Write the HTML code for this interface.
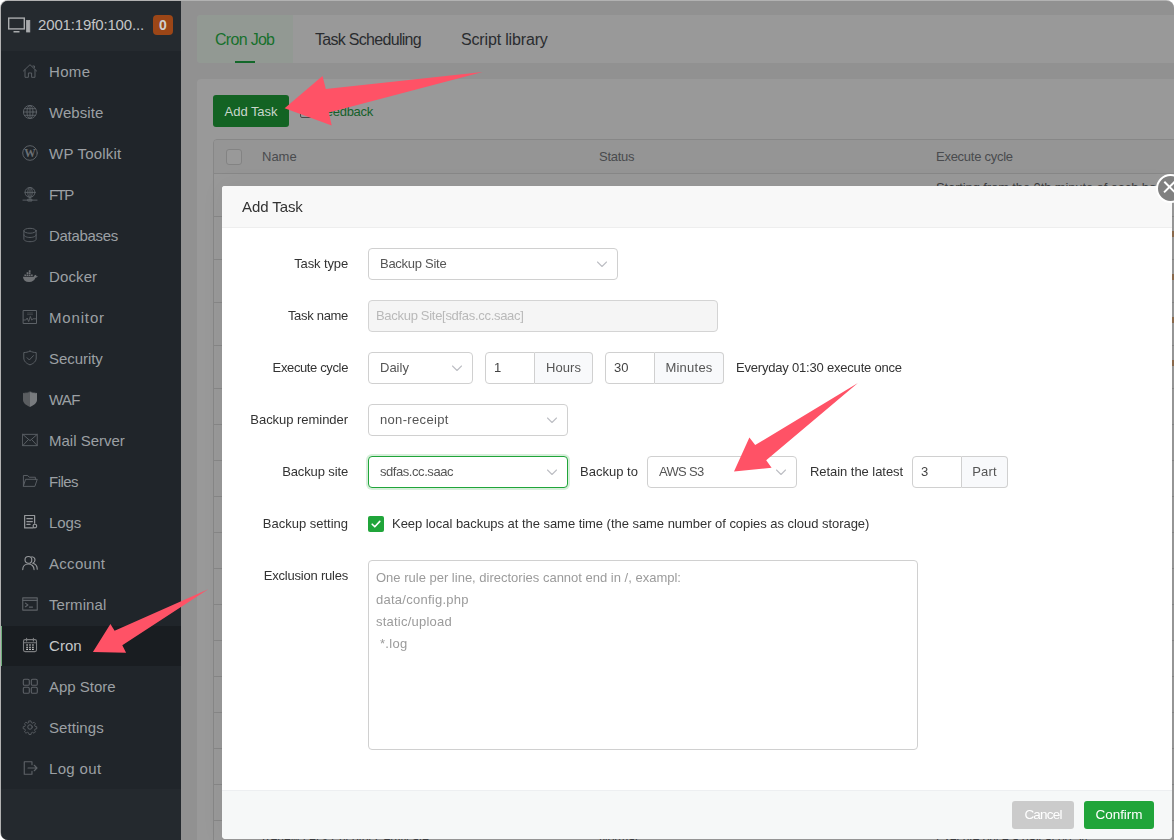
<!DOCTYPE html>
<html lang="en">
<head>
<meta charset="utf-8">
<title>Cron - Add Task</title>
<style>
*{box-sizing:border-box;margin:0;padding:0}
html,body{width:1174px;height:840px;overflow:hidden;background:#fff}
body{font-family:"Liberation Sans",sans-serif;font-size:13px;color:#333}
#frame{position:absolute;left:0;top:0;width:1174px;height:840px;overflow:hidden;background:#919191;clip-path:inset(1px 0 0 1px round 7px 7px 0 7px)}
#edge{position:absolute;left:0;top:0;width:1174px;height:840px;border-radius:8px 8px 0 8px;background:#b2b2b2}
/* sidebar */
#side{position:absolute;left:0;top:0;width:181px;height:840px;background:#24292e}
#side .head{position:absolute;left:0;top:0;width:181px;height:51px;background:#252a2f}
#side .ip{position:absolute;left:38px;top:16px;font-size:15px;line-height:18px;color:#c3c5c7;letter-spacing:-.15px;white-space:nowrap}
#side .badge{position:absolute;left:153px;top:15px;width:20px;height:20px;border-radius:4px;background:#9c4617;color:#cfcfcf;font-weight:bold;font-size:14px;line-height:20px;text-align:center}
#menu{position:absolute;left:0;top:51px;width:181px;height:738px;background:#20252a;list-style:none}
#menu li{position:relative;height:40px;margin-top:1px;line-height:39px;font-size:15px;color:#9ca0a4;padding-left:49px;white-space:nowrap}
#menu li svg{position:absolute;left:22px;top:11px;width:16px;height:16px;fill:none;stroke:#5d6267;stroke-width:1;stroke-linecap:round;stroke-linejoin:round}
#menu li.on{background:#191d21;color:#c6c8ca}

#menu li.on:before{content:"";position:absolute;left:0;top:0;width:2px;height:40px;background:#6fae7b}
/* main */
.card{position:absolute;background:#999;border-radius:4px}
#tabs{left:197px;top:15px;width:1000px;height:48px}
#tabs .t{position:absolute;top:0;height:48px;line-height:49px;font-size:16px;color:#2a2c2f;white-space:nowrap;letter-spacing:-.7px}
#tabs .t.on{left:0;width:96px;background:#929993;color:#17702c;border-radius:4px 0 0 4px;padding-left:18px}
#tabs .t.on:after{content:"";position:absolute;left:38px;bottom:0;width:20px;height:2px;background:#13682a}
#panel{left:197px;top:79px;width:1000px;height:800px}
#addbtn{position:absolute;left:16px;top:16px;width:76px;height:32px;border-radius:3px;background:#136323;color:#c9d6cc;font-size:13px;line-height:34px;text-align:center;letter-spacing:-.06px}
#fb{position:absolute;left:103px;top:16px;height:32px;line-height:34px;color:#15602a;font-size:13px;white-space:nowrap;letter-spacing:-.25px}
#fb i{display:inline-block;width:12px;height:12px;border:1px solid #4a4a4a;border-radius:2px;vertical-align:-2px;margin-right:6px}
#tbl{position:absolute;left:16px;top:60px;width:1000px;height:760px;border:1px solid #878787;border-radius:4px;overflow:hidden}
#tbl .hd{position:relative;height:34px;background:#959595;border-bottom:1px solid #878787;color:#494b4e;font-size:13px;line-height:34px}
#tbl .hd span{position:absolute;top:0}
#tbl .hd .cb{position:absolute;left:12px;top:9px;width:16px;height:16px;border:1px solid #838383;border-radius:3px;background:#999}
#tbl .r{position:relative;border-bottom:1px solid #878787;color:#3c3d3f;font-size:12px;white-space:nowrap}
#tbl .r span{position:absolute}
#tbl .mk{position:absolute;left:958px;top:14px;width:3px;height:6px;background:#8d6c4e}
/* dialog */
#dlg{will-change:transform;position:absolute;left:222px;top:186px;width:950px;height:653px;background:#fff;border-radius:3px 0 4px 4px;box-shadow:0 0 24px rgba(0,0,0,.05)}
#dlg .hd{position:absolute;left:0;top:0;width:950px;height:42px;background:#f8f8f8;border-bottom:1px solid #eee;border-radius:3px 0 0 0}
#dlg .hd b{position:absolute;left:20px;top:0;line-height:42px;font-weight:normal;font-size:15px;color:#333;letter-spacing:-.09px}
#close{position:absolute;left:1155.5px;top:173.5px;width:29px;height:29px;border-radius:50%;background:#808080;border:2.5px solid #fff;z-index:5}
#close:before,#close:after{content:"";position:absolute;left:4.5px;top:10.8px;width:15px;height:2.4px;background:#fff;transform:rotate(45deg)}
#close:after{transform:rotate(-45deg)}
.lb{position:absolute;left:0;width:126px;text-align:right;font-size:13px;line-height:32px;color:#333;white-space:nowrap}
.tx{position:absolute;font-size:13px;line-height:32px;color:#333;white-space:nowrap}
.sel,.inp{position:absolute;height:32px;border:1px solid #d0d0d0;border-radius:4px;background:#fff;font-size:13px;line-height:30px;color:#555;padding-left:11px;white-space:nowrap}
.sel svg{position:absolute;right:9px;top:9px;width:12px;height:12px;fill:none;stroke:#bdbfc4;stroke-width:1.1;stroke-linecap:round;stroke-linejoin:round}
.inp{padding-left:8px;border-radius:4px 0 0 4px;color:#444}
.add{position:absolute;height:32px;border:1px solid #d0d0d0;border-left:0;border-radius:0 4px 4px 0;background:#f8f9fb;font-size:13px;line-height:30px;color:#555;text-align:center}
.dis{background:#f5f5f5;color:#b9b9b9;border-color:#d4d4d4;padding-left:7px}
.foc{border-color:#20a53a;box-shadow:0 0 0 2px rgba(32,165,58,.18)}
#chk{position:absolute;left:146px;top:330px;width:16px;height:16px;border-radius:2px;background:#20a53a}
#chk svg{position:absolute;left:2px;top:2px;width:12px;height:12px;fill:none;stroke:#fff;stroke-width:1.6;stroke-linecap:round;stroke-linejoin:round}
#ta{position:absolute;left:146px;top:374px;width:550px;height:190px;border:1px solid #d0d0d0;border-radius:4px;padding:6px 7px;font-size:13px;line-height:22px;color:#9b9b9b;white-space:pre}
#ft{position:absolute;left:0;top:604px;width:950px;height:49px;background:#f6f8f8;border-top:1px solid #edeff1;border-radius:0 0 4px 4px}
#ft div{position:absolute;top:10px;height:28px;border-radius:3px;color:#fff;font-size:13.5px;line-height:28px;text-align:center}
#cancel{left:790px;width:62px;background:#cbcbcb}
#ok{left:862px;width:70px;background:#20a53a}
#arrows{position:absolute;left:0;top:0;width:1174px;height:840px;z-index:40;pointer-events:none}
</style>
</head>
<body>
<div id="edge"></div>
<div id="frame">
  <div id="side">
    <div class="head">
      <svg style="position:absolute;left:8px;top:16px" width="24" height="18" viewBox="0 0 24 18" fill="none" stroke="#a9abad" stroke-width="1.4"><rect x=".7" y="2.1" width="15.6" height="10.8"/><path d="M5.5 15.7h6" stroke-width="1.5"/><rect x="18.6" y="4.4" width="3.2" height="11.6" fill="#a9abad" stroke-width=".8"/></svg>
      <div class="ip">2001:19f0:100...</div>
      <div class="badge">0</div>
    </div>
    <ul id="menu">
      <li style="letter-spacing:0.33px"><svg viewBox="0 0 17 17"><path d="M1.5 8.5 8.5 1.8l7 6.7M3.2 7.2v8h3.6v-4.6h3.4v4.6h3.6v-8M11.6 3.2h1.6v1.6"/></svg>Home</li>
      <li style="letter-spacing:0.06px"><svg viewBox="0 0 17 17"><circle cx="8.5" cy="8.5" r="7"/><ellipse cx="8.5" cy="8.5" rx="3.2" ry="7"/><path d="M1.5 8.5h14M2.6 5h11.8M2.6 12h11.8M8.5 1.5v14"/></svg>Website</li>
      <li style="letter-spacing:0.22px"><svg viewBox="0 0 16 16"><circle cx="8" cy="8" r="7.3"/><text x="8" y="11.9" text-anchor="middle" font-family="Liberation Serif,serif" font-weight="bold" font-size="11.5" fill="#6c7074" stroke="none">W</text></svg>WP Toolkit</li>
      <li style="letter-spacing:-1.6px"><svg viewBox="0 0 17 17"><circle cx="8.5" cy="6.8" r="5.3"/><ellipse cx="8.5" cy="6.8" rx="2.3" ry="5.3"/><path d="M3.200 6.8h10.600M8.500 1.5v13.500M1 15h15M6.500 14h4v2h-4z"/></svg>FTP</li>
      <li style="letter-spacing:-0.31px"><svg viewBox="0 0 17 17"><ellipse cx="8.5" cy="4" rx="6.5" ry="2.6"/><path d="M2 4v9c0 1.4 2.9 2.6 6.5 2.6S15 14.4 15 13V4M2 8.5c0 1.4 2.9 2.6 6.5 2.6S15 9.9 15 8.5"/></svg>Databases</li>
      <li style="letter-spacing:0.12px"><svg viewBox="0 0 16 16" style="fill:#6f7275;stroke:none"><path d="M.9 7.7h11c.2-1.2 1-2 2.3-2-.1.700 0 1.2.3 1.6.500-.2 1-.2 1.4 0-.4.900-1.3 1.4-2.4 1.4-.9 2.5-3.1 4.2-6.4 4.2C3.400 12.9 1.3 11.2.9 7.7zM2.400 5.4h1.700v1.700H2.400zM4.600 5.4h1.700v1.700H4.600zM6.800 5.4h1.700v1.700H6.800zM9 5.4h1.700v1.700H9zM4.600 3.3h1.700V5H4.600zM6.800 3.3h1.700V5H6.800zM6.800 1.2h1.700v1.700H6.800z" transform="translate(0 1)"/></svg>Docker</li>
      <li style="letter-spacing:0.84px"><svg viewBox="0 0 16 16"><rect x="1.5" y="1.5" width="13" height="13" stroke-width="1"/><path d="M1.500 11h2.300l1.400-2 1.5 3.6 1.6-5.2 1.5 3.8 1-1.4h3.700" stroke-width=".9"/><path d="M5.500 4h5M5.500 5.6h5" stroke-width=".9" opacity=".55"/></svg>Monitor</li>
      <li style="letter-spacing:-0.06px"><svg viewBox="0 0 17 17"><path d="M8.500 1.2c2.200 1 4.4 1.5 6.6 1.5v5.800c0 3.4-2.6 5.8-6.6 7.3-4-1.5-6.6-3.9-6.6-7.3V2.700c2.200 0 4.4-.5 6.6-1.5zM5.400 8.2l2.400 2.4 4.3-4.6"/></svg>Security</li>
      <li style="letter-spacing:-0.74px"><svg viewBox="0 0 16 16" style="stroke:none"><path fill="#5a5d60" d="M1 2.3l1.400-.7v1L3.800 1.2v1.300L5.300.8v1.500L6.700.5v1.600L8 0v16C4 14.2 1 12 1 9z"/><path fill="#787b7e" d="M15 2.3l-1.4-.7v1L12.200 1.2v1.300L10.700.8v1.500L9.300.5v1.600L8 0v16c4-1.8 7-4 7-7z"/></svg>WAF</li>
      <li style="letter-spacing:0px"><svg viewBox="0 0 17 17"><rect x=".8" y="2.5" width="15.4" height="12"/><path d="M.8 2.5l7.700 6.7 7.7-6.7M.8 14.5l5.700-6.2M16.200 14.5l-5.7-6.2"/></svg>Mail Server</li>
      <li style="letter-spacing:-0.52px"><svg viewBox="0 0 17 17"><path d="M1.500 13.8V2.700h4.600l1.600 1.8h6.500v2.200M1.500 13.8l2.300-7.1h12.400l-2.4 7.1z"/></svg>Files</li>
      <li style="letter-spacing:-0.11px"><svg viewBox="0 0 17 17" style="stroke:#96999c"><path d="M11.800 14.8H2.800V1.600h10.600v8.200M5.200 5h5.800M5.200 8h5.800M5.200 11h3.400" stroke-width="1.3"/><circle cx="13.7" cy="12.8" r="1.9" stroke-width="1.3"/></svg>Logs</li>
      <li style="letter-spacing:0.3px"><svg viewBox="0 0 17 17" style="stroke:#96999c"><circle cx="6.8" cy="5.2" r="3.6" stroke-width="1.2"/><path d="M.8 15.5c0-3.6 2.6-6 6-6s6 2.4 6 6M10.400 1.8c2 .2 3.4 1.6 3.4 3.5 0 1.6-1 2.9-2.4 3.4 2.8.6 4.8 3 4.8 6.4" stroke-width="1.2"/></svg>Account</li>
      <li style="letter-spacing:0.09px"><svg viewBox="0 0 17 17"><rect x=".8" y="2" width="15.4" height="13" stroke-width="1.2"/><path d="M.8 4.6h15.400M3.600 7.6l2.700 1.9-2.7 1.9M7.800 11.8h3.400" stroke-width="1.2"/></svg>Terminal</li>
      <li class="on" style="letter-spacing:0.06px"><svg viewBox="0 0 16 16" style="stroke:#7c7e80"><rect x="1.5" y="2.6" width="13" height="12" rx="1.6" stroke-width="1.1"/><path d="M1.500 5.8h13M4.600 1.2v2.800M11.400 1.2v2.800" stroke-width="1.1"/><path d="M4.200 8h1.800M7.100 8h1.800M10 8h1.800M4.200 10.2h1.800M7.100 10.2h1.800M10 10.2h1.800M4.200 12.4h1.800M7.100 12.4h1.800M10 12.4h1.800" stroke="#cfcfcf" stroke-width="1.1" stroke-linecap="butt"/></svg>Cron</li>
      <li style="letter-spacing:0px"><svg viewBox="0 0 16 16"><rect x="1.3" y="1.3" width="6" height="6" rx="1.4" stroke-width="1.1"/><rect x="9.3" y="1.3" width="6" height="6" rx="1.4" stroke-width="1.1"/><rect x="1.3" y="9.3" width="6" height="6" rx="1.4" stroke-width="1.1"/><rect x="9.3" y="9.3" width="6" height="6" rx="1.4" stroke-width="1.1"/></svg>App Store</li>
      <li style="letter-spacing:0.07px"><svg viewBox="0 0 17 17"><circle cx="8.5" cy="8.5" r="2.4"/><path d="M7.300 1.2h2.400l.4 2 1.5.7 1.8-1.1 1.7 1.7-1.1 1.8.7 1.5 2 .4v2.400l-2 .4-.7 1.5 1.1 1.8-1.7 1.7-1.8-1.1-1.5.7-.4 2H7.300l-.4-2-1.5-.7-1.8 1.1-1.7-1.7L3 12.5l-.7-1.5-2-.4V8.200l2-.4L3 6.3 1.9 4.5l1.700-1.7 1.8 1.1 1.5-.7z" transform="translate(1 1) scale(.88)"/></svg>Settings</li>
      <li style="letter-spacing:0.34px"><svg viewBox="0 0 17 17"><path d="M10.600 5V1.800H2.400v13.400h8.200V12M6.400 8.5h9.400M13 5.6l2.900 2.9-2.9 2.9" stroke-width="1.2"/></svg>Log out</li>
    </ul>
  </div>

  <div class="card" id="tabs">
    <div class="t on">Cron Job</div>
    <div class="t" style="left:118px">Task Scheduling</div>
    <div class="t" style="left:264px;letter-spacing:-.16px">Script library</div>
  </div>

  <div class="card" id="panel">
    <div id="addbtn">Add Task</div>
    <div id="fb"><i></i>Feedback</div>
    <div id="tbl">
      <div class="hd"><i class="cb"></i><span style="left:48px">Name</span><span style="left:385px;letter-spacing:-.25px">Status</span><span style="left:722px;letter-spacing:-.26px">Execute cycle</span></div>
      <div class="r" style="height:43px"><span style="left:722px;top:6px;line-height:16px;font-size:13px;letter-spacing:-.12px">Starting from the 0th minute of each hour,<br>execute every 2 hours</span></div>
      <div class="r" style="height:43px"><i class="mk"></i></div>
      <div class="r" style="height:43px"><i class="mk"></i></div>
      <div class="r" style="height:43px"><i class="mk"></i></div>
      <div class="r" style="height:43px"><i class="mk"></i></div>
      <div class="r" style="height:36px"></div>
      <div class="r" style="height:36px"></div>
      <div class="r" style="height:36px"></div>
      <div class="r" style="height:36px"></div>
      <div class="r" style="height:36px"></div>
      <div class="r" style="height:36px"></div>
      <div class="r" style="height:36px"></div>
      <div class="r" style="height:36px"></div>
      <div class="r" style="height:36px"></div>
      <div class="r" style="height:36px"></div>
      <div class="r" style="height:36px"></div>
      <div class="r" style="height:36px"></div>
      <div class="r" style="height:36px;line-height:36px"><span style="left:48px">Renew Let's Encrypt Certificate</span><span style="left:385px">Normal</span><span style="left:722px">Execute once a day at 00:54</span></div>
    </div>
  </div>

  <div id="dlg">
    <div class="hd"><b>Add Task</b></div>

    <div class="lb" style="top:62px;letter-spacing:-0.13px">Task type</div>
    <div class="sel" style="left:146px;top:62px;width:250px;letter-spacing:-0.27px">Backup Site<svg viewBox="0 0 12 12"><path d="M1.500 4l4.500 4.5L10.500 4"/></svg></div>

    <div class="lb" style="top:114px;letter-spacing:-0.31px">Task name</div>
    <div class="sel dis" style="left:146px;top:114px;width:350px;letter-spacing:-0.3px">Backup Site[sdfas.cc.saac]</div>

    <div class="lb" style="top:166px;letter-spacing:-0.37px">Execute cycle</div>
    <div class="sel" style="left:146px;top:166px;width:105px">Daily<svg viewBox="0 0 12 12"><path d="M1.500 4l4.500 4.5L10.500 4"/></svg></div>
    <div class="inp" style="left:263px;top:166px;width:50px">1</div>
    <div class="add" style="left:313px;top:166px;width:58px;letter-spacing:0.05px">Hours</div>
    <div class="inp" style="left:383px;top:166px;width:50px">30</div>
    <div class="add" style="left:433px;top:166px;width:69px;letter-spacing:0.24px">Minutes</div>
    <div class="tx" style="left:514px;top:166px;letter-spacing:-0.2px">Everyday 01:30 execute once</div>

    <div class="lb" style="top:218px;letter-spacing:-0.04px">Backup reminder</div>
    <div class="sel" style="left:146px;top:218px;width:200px;letter-spacing:0.33px">non-receipt<svg viewBox="0 0 12 12"><path d="M1.500 4l4.500 4.5L10.500 4"/></svg></div>

    <div class="lb" style="top:270px;letter-spacing:-0.13px">Backup site</div>
    <div class="sel foc" style="left:146px;top:270px;width:200px;letter-spacing:-0.44px">sdfas.cc.saac<svg viewBox="0 0 12 12"><path d="M1.500 4l4.500 4.5L10.500 4"/></svg></div>
    <div class="tx" style="left:358px;top:270px;letter-spacing:0.02px">Backup to</div>
    <div class="sel" style="left:425px;top:270px;width:150px;letter-spacing:-0.67px">AWS S3<svg viewBox="0 0 12 12"><path d="M1.500 4l4.500 4.5L10.500 4"/></svg></div>
    <div class="tx" style="left:588px;top:270px;letter-spacing:-0.05px">Retain the latest</div>
    <div class="inp" style="left:690px;top:270px;width:50px">3</div>
    <div class="add" style="left:740px;top:270px;width:46px;letter-spacing:0.12px">Part</div>

    <div class="lb" style="top:322px;letter-spacing:-0.01px">Backup setting</div>
    <div id="chk"><svg viewBox="0 0 12 12"><path d="M2.200 6.2l2.600 2.6 5-5.4"/></svg></div>
    <div class="tx" style="left:170px;top:322px;letter-spacing:-0.04px">Keep local backups at the same time (the same number of copies as cloud storage)</div>

    <div class="lb" style="top:374px;letter-spacing:-0.22px">Exclusion rules</div>
    <div id="ta"><span>One rule per line, directories cannot end in /, exampl:</span>
<span style="letter-spacing:.26px">data/config.php</span>
<span style="letter-spacing:.23px">static/upload</span>
<span style="letter-spacing:.34px"> *.log</span></div>

    <div id="ft"><div id="cancel" style="letter-spacing:-0.81px">Cancel</div><div id="ok" style="letter-spacing:-0.06px">Confirm</div></div>
  </div>
  <div id="close"></div>

  <svg id="arrows" viewBox="0 0 1174 840">
    <g fill="#ff5266">
      <polygon points="482.6,72.1 325.8,89 322.5,76.1 284.6,108.2 331.7,125.6 328.8,112.5"/>
      <polygon points="857.9,383 755.2,445.1 749.4,437.5 734,471.5 771.6,467.7 766.2,460.2"/>
      <polygon points="208.2,589.3 114.6,630.7 110.4,624.1 92.9,651.9 126.1,652.7 122.3,645.3"/>
    </g>
  </svg>
</div>
</body>
</html>
